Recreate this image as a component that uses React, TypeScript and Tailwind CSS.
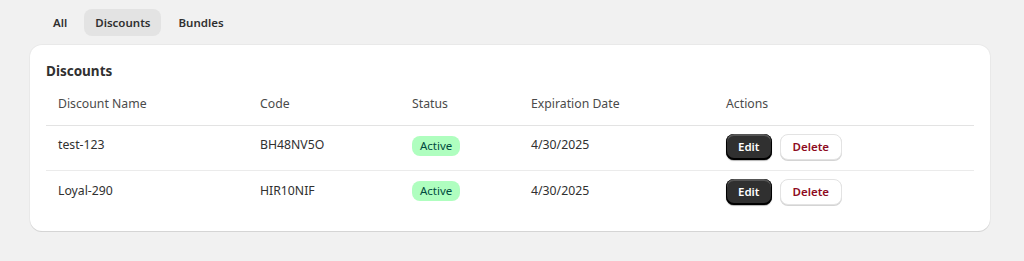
import { useState } from "react";

type Discount = { name: string; code: string; status: string; expires: string };

const discounts: Discount[] = [
  { name: "test-123", code: "BH48NV5O", status: "Active", expires: "4/30/2025" },
  { name: "Loyal-290", code: "HIR10NIF", status: "Active", expires: "4/30/2025" },
];

const tabs = ["All", "Discounts", "Bundles"];

export default function App() {
  const [tab, setTab] = useState("Discounts");

  return (
    <div className="min-h-[261px] bg-[#f1f1f1] pl-[30px] pr-[34px] pt-[9px] text-[12.25px] text-[#303030] [font-family:'Noto_Sans',sans-serif]">
      <div className="flex gap-[6px] pl-3">
        {tabs.map((t) => (
          <button
            key={t}
            onClick={() => setTab(t)}
            className={`h-[27px] rounded-lg px-[11px] text-[11.5px] font-semibold text-[#303030] ${tab === t ? "bg-[#e3e3e3]" : ""}`}
          >
            {t}
          </button>
        ))}
      </div>

      <div className="mt-[9px] rounded-xl bg-white p-4 shadow-[0_1px_0_0_rgba(26,26,26,0.07),0_1px_0_0_#e3e3e3,0_0_0_1px_rgba(0,0,0,0.03)]">
        <h2 className="text-[13.5px] font-bold leading-5">Discounts</h2>
        <table className="w-full border-collapse text-left">
          <thead>
            <tr className="h-[44px] border-b border-[#e3e3e3]">
              <th className="w-[202px] px-3 pt-[2px] font-normal text-[#4a4a4a]">Discount Name</th>
              <th className="w-[152px] px-3 pt-[2px] font-normal text-[#4a4a4a]">Code</th>
              <th className="w-[119px] px-3 pt-[2px] font-normal text-[#4a4a4a]">Status</th>
              <th className="w-[195px] px-3 pt-[2px] font-normal text-[#4a4a4a]">Expiration Date</th>
              <th className="px-3 pt-[2px] font-normal text-[#4a4a4a]">Actions</th>
            </tr>
          </thead>
          <tbody>
            {discounts.map((d, i) => (
              <tr key={d.code} className={`h-[45px] ${i < discounts.length - 1 ? "border-b border-[#ebebeb]" : ""}`}>
                <td className="px-3 pb-1">{d.name}</td>
                <td className="px-3 pb-1">{d.code}</td>
                <td className="px-3 pb-1">
                  <span className="inline-flex h-5 items-center rounded-lg bg-[#affebf] px-2 text-[11.5px] text-[#014b40]">
                    {d.status}
                  </span>
                </td>
                <td className="px-3 pb-1">{d.expires}</td>
                <td className="px-3 pb-[2px]">
                  <div className="flex gap-2">
                    <button className="h-[26px] rounded-lg bg-[#303030] px-3 text-[11.5px] font-semibold text-white shadow-[inset_0_-1px_0_1px_#000,inset_0_1px_0_1px_#555,0_1px_1px_rgba(0,0,0,0.3)]">
                      Edit
                    </button>
                    <button className="h-[26px] rounded-lg border border-[#e3e3e3] bg-white px-3 text-[11.5px] font-semibold text-[#8e0b21] shadow-[0_1px_0_0_#d4d4d4]">
                      Delete
                    </button>
                  </div>
                </td>
              </tr>
            ))}
          </tbody>
        </table>
      </div>
    </div>
  );
}
